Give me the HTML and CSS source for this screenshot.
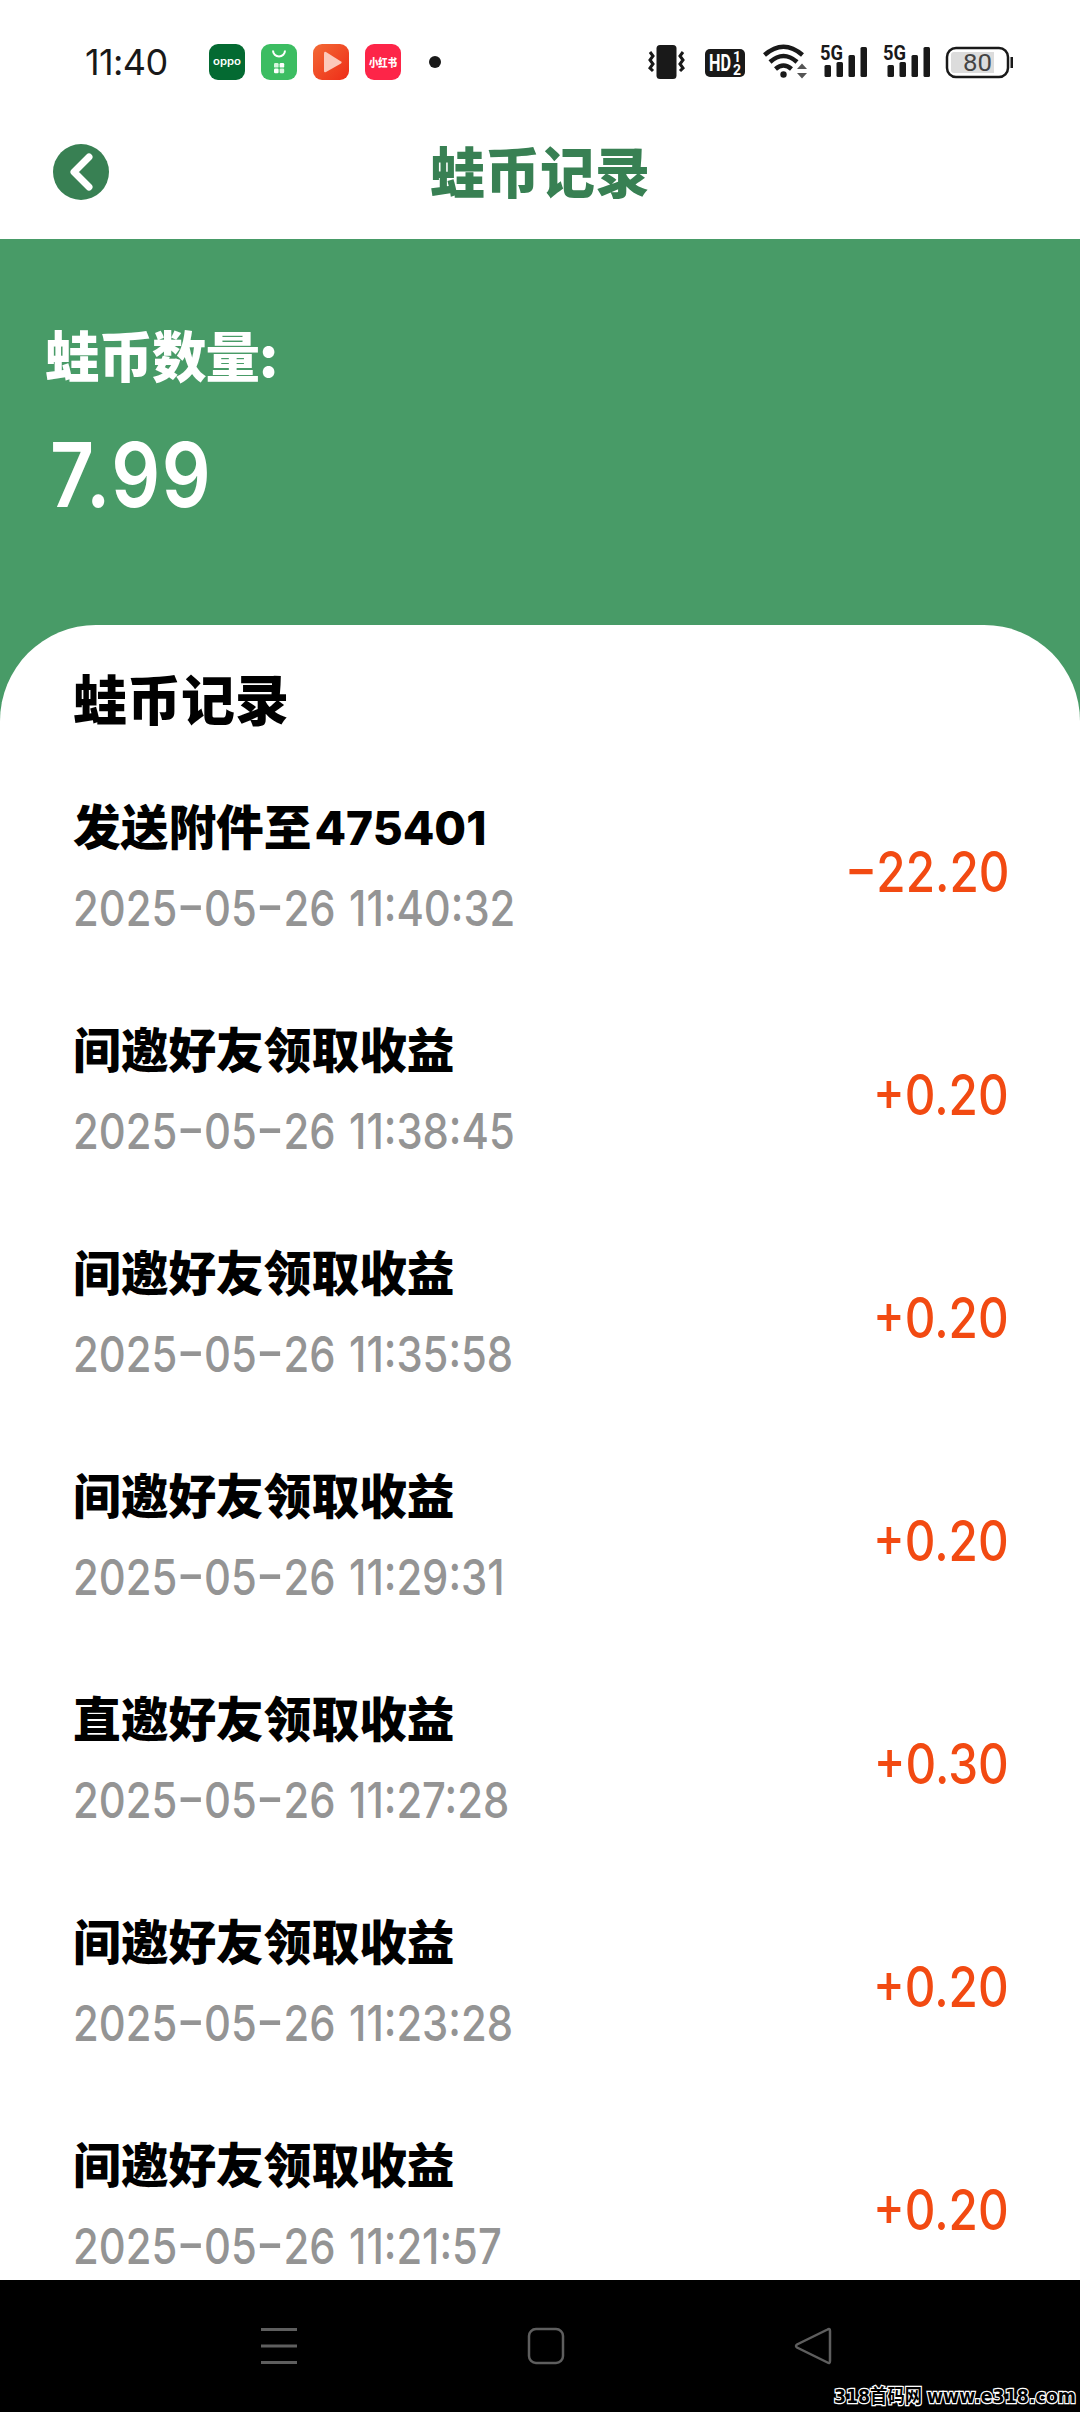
FILE: index.html
```html
<!DOCTYPE html>
<html lang="zh-CN">
<head>
<meta charset="utf-8">
<title>蛙币记录</title>
<link rel="stylesheet" href="styles.css">
</head>
<body>
<div class="status">
  <span class="clock">11:40</span>
  <div class="apps">
    <svg width="36" height="36" viewBox="0 0 36 36"><rect width="36" height="36" rx="9" fill="#046a32"/><text x="4" y="21" class="oppo" textLength="28" lengthAdjust="spacingAndGlyphs">oppo</text></svg>
    <svg width="36" height="36" viewBox="0 0 36 36"><rect width="36" height="36" rx="9" fill="#3cbd62"/><path d="M12 6.500a6 6 0 0 0 12 0" fill="none" stroke="#fff" stroke-width="2"/><g fill="#d9f5df"><rect x="13" y="19" width="4.600" height="4.600" rx="1.200"/><rect x="18.600" y="19" width="4.600" height="4.600" rx="1.200" fill="#fff"/><rect x="13" y="24.600" width="4.600" height="4.600" rx="1.200" fill="#fff"/><rect x="18.600" y="24.600" width="4.600" height="4.600" rx="1.200"/></g></svg>
    <svg width="36" height="36" viewBox="0 0 36 36"><defs><linearGradient id="play" x2="1" y2="1"><stop stop-color="#f36a35"/><stop offset="1" stop-color="#ee2c18"/></linearGradient></defs><rect width="36" height="36" rx="9" fill="url(#play)"/><path d="M11 9.500v17.500q0 2 2 1L28 19.500q1.500-1 0-2L13 8Q11 7 11 9.500z" fill="#fcc9bb"/></svg>
    <svg width="36" height="36" viewBox="0 0 36 36"><rect width="36" height="36" rx="9" fill="#fd2548"/><text x="4" y="22.500" class="red" textLength="28" lengthAdjust="spacingAndGlyphs">小红书</text></svg>
  </div>
  <i class="dot"></i>
  <svg class="system" width="370" height="40" viewBox="645 42 370 40">
    <g fill="#191919">
      <rect x="656.500" y="45" width="20" height="34" rx="3.500"/>
      <path d="M650 52l3 4-3 4 3 4-3 4 3 3M683 52l-3 4 3 4-3 4 3 4-3 3" fill="none" stroke="#191919" stroke-width="3"/>
      <rect x="705" y="49" width="40" height="28" rx="5"/>
      <text x="709" y="71" class="hd" textLength="22" lengthAdjust="spacingAndGlyphs">HD</text>
      <text x="733" y="62" class="sim">1</text><text x="733" y="74.500" class="sim">2</text>
      <g fill="none" stroke="#191919" stroke-width="4.500"><path d="M764.500 55q19-16.500 38 0"/><path d="M770 62q13.500-12 27 0"/><path d="M775.500 69q8-7 16 0"/></g>
      <circle cx="783.500" cy="74.500" r="3.200"/>
      <path d="M797 69l5-5.500 5 5.500zM797 73h10l-5 5.500z" fill="#555"/>
      <g id="signal"><text x="820" y="60" class="net" textLength="23" lengthAdjust="spacingAndGlyphs">5G</text><rect x="824.500" y="65" width="6.500" height="12" rx="1.500"/><rect x="836.500" y="62" width="6.500" height="15" rx="1.500"/><rect x="848.500" y="55" width="6.500" height="22" rx="1.500"/><rect x="860.500" y="47" width="6.500" height="30" rx="1.500"/></g>
      <use href="#signal" x="63"/>
    </g>
    <rect x="947" y="48" width="61" height="29" rx="9" fill="#fff" stroke="#191919" stroke-width="2.500"/>
    <path d="M954 52h40v21h-40q-3 0-3-3V55q0-3 3-3z" fill="#dcdcdc"/>
    <rect x="1010.500" y="57" width="2.500" height="11" fill="#191919"/>
    <text x="963" y="71" class="battery" textLength="29" lengthAdjust="spacingAndGlyphs">80</text>
  </svg>
</div>
<header class="header">
  <svg class="back" width="56" height="56" viewBox="0 0 56 56"><circle cx="28" cy="28" r="28" fill="#388053"/><path d="M36 13L21 28l15 15" fill="none" stroke="#fff" stroke-width="7" stroke-linecap="round" stroke-linejoin="round"/></svg>
  <h1 class="title">蛙币记录</h1>
</header>
<section class="balance">
  <div class="label">蛙币数量:</div>
  <div class="total">7.99</div>
</section>
<main class="card">
  <h2 class="heading">蛙币记录</h2>
  <div class="row"><div class="info"><div class="name">发送附件至<span class="id">475401</span></div><div class="date">2025<span class="dash">-</span>05<span class="dash">-</span>26 11:40:32</div></div><div class="amount"><span class="dash">-</span>22.20</div></div>
  <div class="row"><div class="info"><div class="name">间邀好友领取收益</div><div class="date">2025<span class="dash">-</span>05<span class="dash">-</span>26 11:38:45</div></div><div class="amount">+0.20</div></div>
  <div class="row"><div class="info"><div class="name">间邀好友领取收益</div><div class="date">2025<span class="dash">-</span>05<span class="dash">-</span>26 11:35:58</div></div><div class="amount">+0.20</div></div>
  <div class="row"><div class="info"><div class="name">间邀好友领取收益</div><div class="date">2025<span class="dash">-</span>05<span class="dash">-</span>26 11:29:31</div></div><div class="amount">+0.20</div></div>
  <div class="row"><div class="info"><div class="name">直邀好友领取收益</div><div class="date">2025<span class="dash">-</span>05<span class="dash">-</span>26 11:27:28</div></div><div class="amount">+0.30</div></div>
  <div class="row"><div class="info"><div class="name">间邀好友领取收益</div><div class="date">2025<span class="dash">-</span>05<span class="dash">-</span>26 11:23:28</div></div><div class="amount">+0.20</div></div>
  <div class="row"><div class="info"><div class="name">间邀好友领取收益</div><div class="date">2025<span class="dash">-</span>05<span class="dash">-</span>26 11:21:57</div></div><div class="amount">+0.20</div></div>
</main>
<footer class="nav">
  <svg width="40" height="40" viewBox="0 0 40 40"><path d="M2 3.500h36M2 20h36M2 36.500h36" stroke="#5e5e5e" stroke-width="3"/></svg>
  <svg width="40" height="40" viewBox="0 0 40 40"><rect x="3" y="3" width="34" height="34" rx="7" fill="none" stroke="#5e5e5e" stroke-width="2.500"/></svg>
  <svg width="40" height="40" viewBox="0 0 40 40"><path d="M34.500 3.500Q37 2 37 5v30q0 3-2.500 1.500L4 21.500q-2-1.500 0-3z" fill="none" stroke="#5e5e5e" stroke-width="2.500"/></svg>
  <svg class="mark" width="246" height="30" viewBox="0 0 246 30"><text x="1" y="21" textLength="88" lengthAdjust="spacingAndGlyphs">318首码网</text><text x="94" y="21" textLength="149" lengthAdjust="spacingAndGlyphs">www.e318.com</text></svg>
</footer>
</body>
</html>
```
FILE: styles.css
```css
* { box-sizing: border-box; }
body {
  margin: 0;
  width: 1080px;
  height: 2412px;
  overflow: hidden;
  display: flex;
  flex-direction: column;
  background: #fff;
  color: #000;
  font-family: "Noto Sans CJK SC", sans-serif;
}
.status {
  height: 124px;
  flex: none;
  display: flex;
  align-items: center;
  padding: 0 65px 0 85px;
  color: #191919;
}
.clock {
  width: 124px;
  font: 400 36px/40px Inter, sans-serif;
  letter-spacing: -.6px;
}
.apps { display: flex; gap: 16px; }
.dot {
  width: 12px;
  height: 12px;
  margin-left: 28px;
  border-radius: 50%;
  background: #191919;
}
.system { margin-left: auto; }
.oppo { font: 600 10px Inter, sans-serif; fill: #fff; }
.red { font: 900 11px "Noto Sans CJK SC", sans-serif; fill: #fff; }
.hd { font: 700 23px Roboto, sans-serif; fill: #fff; }
.sim { font: 700 14px Roboto, sans-serif; fill: #fff; }
.net { font: 700 20px Roboto, sans-serif; }
.battery { font: 400 24px Roboto, sans-serif; fill: #444; }
.header {
  height: 115px;
  flex: none;
  display: grid;
  grid-template-columns: 56px 1fr 56px;
  padding: 20px 53px 0;
}
.title {
  margin: 0;
  text-align: center;
  font-size: 55px;
  line-height: 50px;
  font-weight: 900;
  color: #388053;
}
.balance {
  height: 386px;
  flex: none;
  padding: 80px 45px 0;
  background: #489b67;
  color: #fff;
}
.label {
  font-size: 54.500px;
  line-height: 70px;
  font-weight: 900;
  letter-spacing: -1px;
}
.total {
  width: max-content;
  margin: 38px 0 0 5px;
  font: 600 89px/96px Inter, sans-serif;
  letter-spacing: 1.800px;
  transform: scaleX(.86);
  transform-origin: left;
}
.card {
  flex: 1;
  min-height: 0;
  overflow: hidden;
  padding: 37px 73px 0;
  background: linear-gradient(#489b67 0 96px, #fff 96px);
  position: relative;
  z-index: 0;
}
.card::before {
  content: "";
  position: absolute;
  inset: 0;
  z-index: -1;
  border-radius: 96px 96px 0 0;
  background: #fff;
}
.heading {
  margin: 0 0 55px;
  font-size: 54px;
  line-height: 72px;
  font-weight: 900;
}
.row {
  height: 223px;
  display: flex;
  justify-content: space-between;
}
.name {
  height: 72px;
  font-size: 47.700px;
  line-height: 72px;
  font-weight: 900;
  white-space: nowrap;
}
.id {
  margin-left: 3px;
  font-family: Inter, sans-serif;
  font-weight: 800;
  font-size: 46px;
}
.date {
  width: max-content;
  margin-top: 19px;
  font: 500 50px/56px Inter, sans-serif;
  word-spacing: 3px;
  color: #949494;
  transform: scaleX(.835);
  transform-origin: left;
}
.dash {
  display: inline-block;
  width: .64em;
  text-align: center;
  transform: translateY(-.06em) scaleX(1.5);
}
.amount {
  margin-top: 51px;
  height: 64px;
  font: 500 56px/64px Inter, sans-serif;
  color: #f24a12;
  transform: translateX(2px) scaleX(.85);
  transform-origin: right;
}
.nav {
  height: 132px;
  flex: none;
  position: relative;
  display: flex;
  justify-content: space-between;
  padding: 46px 247px 0 259px;
  background: #000;
}
.mark {
  position: absolute;
  right: 1px;
  bottom: 0;
  font: 700 19px "DejaVu Sans", "Noto Sans CJK SC", sans-serif;
  fill: #000;
  stroke: #fff;
  stroke-width: 2.500px;
  paint-order: stroke;
}
```
